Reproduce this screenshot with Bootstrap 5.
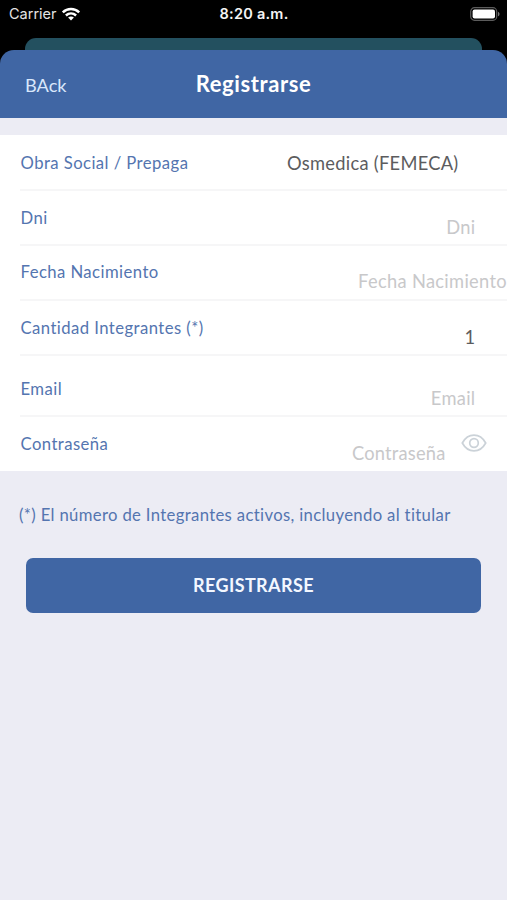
<!DOCTYPE html>
<html lang="es">
<head>
<meta charset="utf-8">
<meta name="viewport" content="width=device-width, initial-scale=1">
<title>Registrarse</title>
<link href="https://cdn.jsdelivr.net/npm/bootstrap@5.3.0/dist/css/bootstrap.min.css" rel="stylesheet">
<style>
  html, body { height: 100%; }
  body { background: #ececf4; font-family: Lato, sans-serif; overflow: hidden; }
  .top-area { background: #000; height: 118px; }
  .status { height: 38px; padding: 0 7px 10px 9px; font-family: Inter, sans-serif; color: #e4e4e4; font-size: 14.5px; line-height: 28px; }
  .status-time { color: #f4f4f4; font-size: 14.5px; font-weight: 600; letter-spacing: .25px; margin-left: -1px; }
  .sheet-behind { height: 12px; margin: 0 25px; background: #23505f; border-radius: 11px 11px 0 0; }
  .title-bar { height: 68px; background: #4066a4; border-radius: 14px 14px 0 0; padding: 0 25px; }
  .back { color: #d9e7fb; font-size: 18.2px; padding-top: 3px; }
  .title { font-size: 22px; font-weight: 700; letter-spacing: .6px; padding-bottom: 2px; }
  .fields { margin-top: 17px; background: #fff; }
  .field { height: 55px; padding-top: 16px; }
  .field + .field::before { content: ""; position: absolute; top: -1px; left: 20px; right: 0; height: 2px; background: #f6f6f7; }
  .f-date { padding-top: 15px; }
  .f-mail { height: 61px; padding-top: 22px; }
  .cap { margin-left: 20.5px; font-size: 16.7px; line-height: 24px; color: #5475b0; letter-spacing: .43px; }
  .val { margin: 9px 31.5px 0 0; font-size: 18.3px; line-height: 24px; color: #c8c8ca; letter-spacing: .32px; }
  .val-set { color: #5c5c5e; }
  .v-insurer { margin: 0 48.5px 0 0; letter-spacing: .28px; }
  .v-date { margin-right: 0; }
  .v-pass { margin-right: 15.5px; letter-spacing: .2px; }
  .eye { margin: 1px 20px 0 0; }
  .note { margin: 32px 0 0 19px; font-size: 16.7px; line-height: 24px; color: #5475b0; letter-spacing: .34px; }
  .submit { margin: 31px 26px 0; height: 55px; background: #4066a4; color: #f3f7ff; border: 0; border-radius: 7px; font-size: 18px; font-weight: 700; letter-spacing: .4px; }
</style>
</head>
<body>
<header class="top-area">
  <div class="status row g-0">
    <div class="col d-flex align-items-center gap-1"><span>Carrier</span>
      <svg width="20" height="14" viewBox="0 0 20 14" fill="none" stroke="#fff" stroke-width="2.5"><path d="M1.8 5.3C6.4.8 13.6.8 18.2 5.3M4.9 8.5c3-2.8 7.2-2.8 10.2 0"/><path d="M10 13.5 7.1 10.6c1.6-1.5 4.2-1.5 5.8 0z" fill="#fff" stroke="none"/></svg>
    </div>
    <div class="col-auto status-time">8:20 a.m.</div>
    <div class="col d-flex align-items-center justify-content-end">
      <svg width="30" height="14" viewBox="0 0 30 14"><rect x=".7" y=".7" width="26" height="12.6" rx="3.8" fill="none" stroke="#5c5c5c" stroke-width="1.2"/><rect x="2.6" y="2.4" width="22.4" height="9.2" rx="2" fill="#fff"/><path d="M28 4.7c2 .8 2 3.8 0 4.6z" fill="#777"/></svg>
    </div>
  </div>
  <div class="sheet-behind"></div>
  <nav class="title-bar row g-0 align-items-center">
    <div class="col back">BAck</div>
    <div class="col-auto title text-white">Registrarse</div>
    <div class="col"></div>
  </nav>
</header>
<main>
  <div class="fields">
    <div class="field position-relative d-flex justify-content-between align-items-start text-nowrap"><span class="cap">Obra Social / Prepaga</span><span class="val val-set v-insurer">Osmedica (FEMECA)</span></div>
    <div class="field position-relative d-flex justify-content-between align-items-start"><span class="cap">Dni</span><span class="val">Dni</span></div>
    <div class="field f-date position-relative d-flex justify-content-between align-items-start text-nowrap"><span class="cap">Fecha Nacimiento</span><span class="val v-date">Fecha Nacimiento</span></div>
    <div class="field position-relative d-flex justify-content-between align-items-start"><span class="cap">Cantidad Integrantes (*)</span><span class="val val-set">1</span></div>
    <div class="field f-mail position-relative d-flex justify-content-between align-items-start"><span class="cap">Email</span><span class="val">Email</span></div>
    <div class="field position-relative d-flex align-items-start"><span class="cap me-auto">Contraseña</span><span class="val v-pass">Contraseña</span>
      <svg class="eye" width="26" height="20" viewBox="0 0 26 20" fill="none" stroke="#cbd2d8" stroke-width="1.7"><path d="M1.3 10C7-.5 19-.5 24.700 10 19 20.500 7 20.500 1.300 10z"/><circle cx="13" cy="10" r="4.300"/></svg>
    </div>
  </div>
  <p class="note mb-0 text-nowrap">(*) El número de Integrantes activos, incluyendo al titular</p>
  <div class="d-grid"><button type="button" class="btn submit">REGISTRARSE</button></div>
</main>
<script src="https://cdn.jsdelivr.net/npm/bootstrap@5.3.0/dist/js/bootstrap.bundle.min.js"></script>
</body>
</html>
